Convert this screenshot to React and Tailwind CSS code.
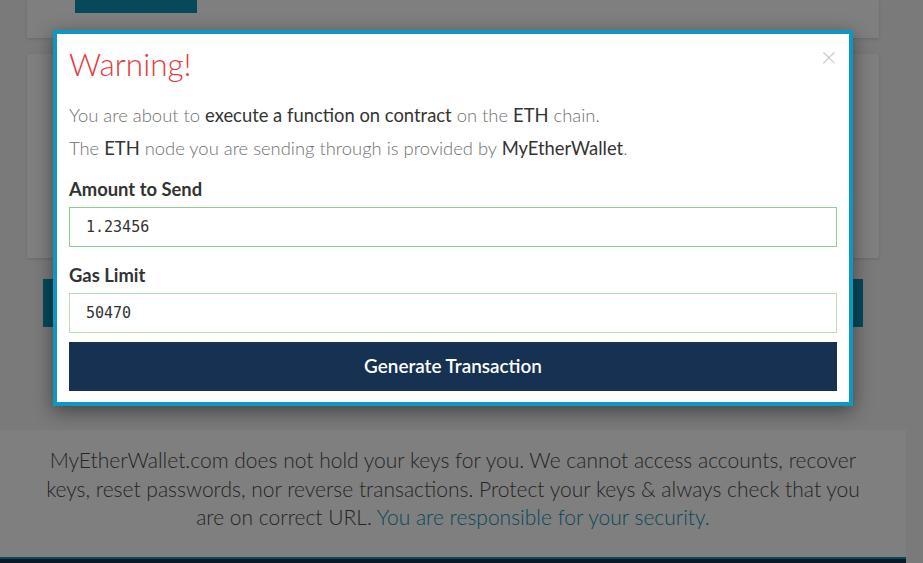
const lato = { fontFamily: '"Lato", "Open Sans", sans-serif' }

function Field({ label, value, tone, gap }) {
  return (
    <div className={gap}>
      <label className="block text-[18.4px] font-bold leading-[22px] text-[#333] mb-[7px]">{label}</label>
      <input
        readOnly
        value={value}
        className={`block w-full h-10 px-4 bg-white border text-[15px] text-[#333] outline-none ${tone}`}
        style={{ fontFamily: '"DejaVu Sans Mono", "Liberation Mono", monospace' }}
      />
    </div>
  )
}

export default function App() {
  return (
    <div className="relative h-[563px] w-[923px] overflow-hidden bg-[#f4f4f4]" style={lato}>
      {/* page behind the modal */}
      <div className="w-[906px] flex flex-col">
        <div className="mx-[27px] h-[38px] bg-white shadow-[0_1px_3px_rgba(0,0,0,0.15)]">
          <div className="ml-[48px] w-[122px] h-[13px] bg-[#0e90b4]"></div>
        </div>
        <div className="mx-[27px] mt-[16px] h-[204px] bg-white shadow-[0_1px_3px_rgba(0,0,0,0.15)]"></div>
        <div className="mx-[43px] mt-[21px] h-[48px] bg-[#0e90b4]"></div>
        <div className="mt-[103px] h-[127px] bg-white pt-[16px] text-center">
          <p className="mx-auto w-[820px] text-[21px] font-light leading-[28.7px] text-[#4a4a4a]">
            MyEtherWallet.com does not hold your keys for you. We cannot access accounts, recover keys, reset passwords, nor reverse transactions. Protect your keys &amp; always check that you are on correct URL. <span className="text-[#0e90b4]">You are responsible for your security.</span>
          </p>
        </div>
        <div className="h-[2px] bg-[#0e90b4]"></div>
        <div className="h-[10px] bg-[#163151]"></div>
      </div>

      {/* overlay */}
      <div className="absolute inset-0 bg-black/50"></div>

      {/* modal */}
      <div className="absolute left-[53px] top-[30px] w-[800px] border-4 border-[#0e97c0] bg-white shadow-[0_5px_18px_rgba(0,0,0,0.45)]">
        <div className="relative px-3 pt-3 pb-[11px]">
          <button className="absolute right-[12px] top-[8px] text-[28px] leading-none font-light text-[#c8c8c8]">×</button>
          <h2 className="text-[31.5px] font-light leading-[36px] text-[#e8383d]">Warning!</h2>
          <p className="mt-[22px] text-[18.4px] font-light leading-[22px] text-[#707070]">
            You are about to <span className="font-normal text-[#333]">execute a function on contract</span> on the <span className="font-normal text-[#333]">ETH</span> chain.
          </p>
          <p className="mt-[11px] text-[18.4px] font-light leading-[22px] text-[#707070]">
            The <span className="font-normal text-[#333]">ETH</span> node you are sending through is provided by <span className="font-normal text-[#333]">MyEtherWallet</span>.
          </p>
          <Field gap="mt-[19px]" label="Amount to Send" value="1.23456" tone="border-[#8dd08a]" />
          <Field gap="mt-[17px]" label="Gas Limit" value="50470" tone="border-[#b6e2b3]" />
          <button className="mt-[9px] block w-full h-[49px] bg-[#163151] text-white text-[18.9px] font-semibold">
            Generate Transaction
          </button>
        </div>
      </div>
    </div>
  )
}
